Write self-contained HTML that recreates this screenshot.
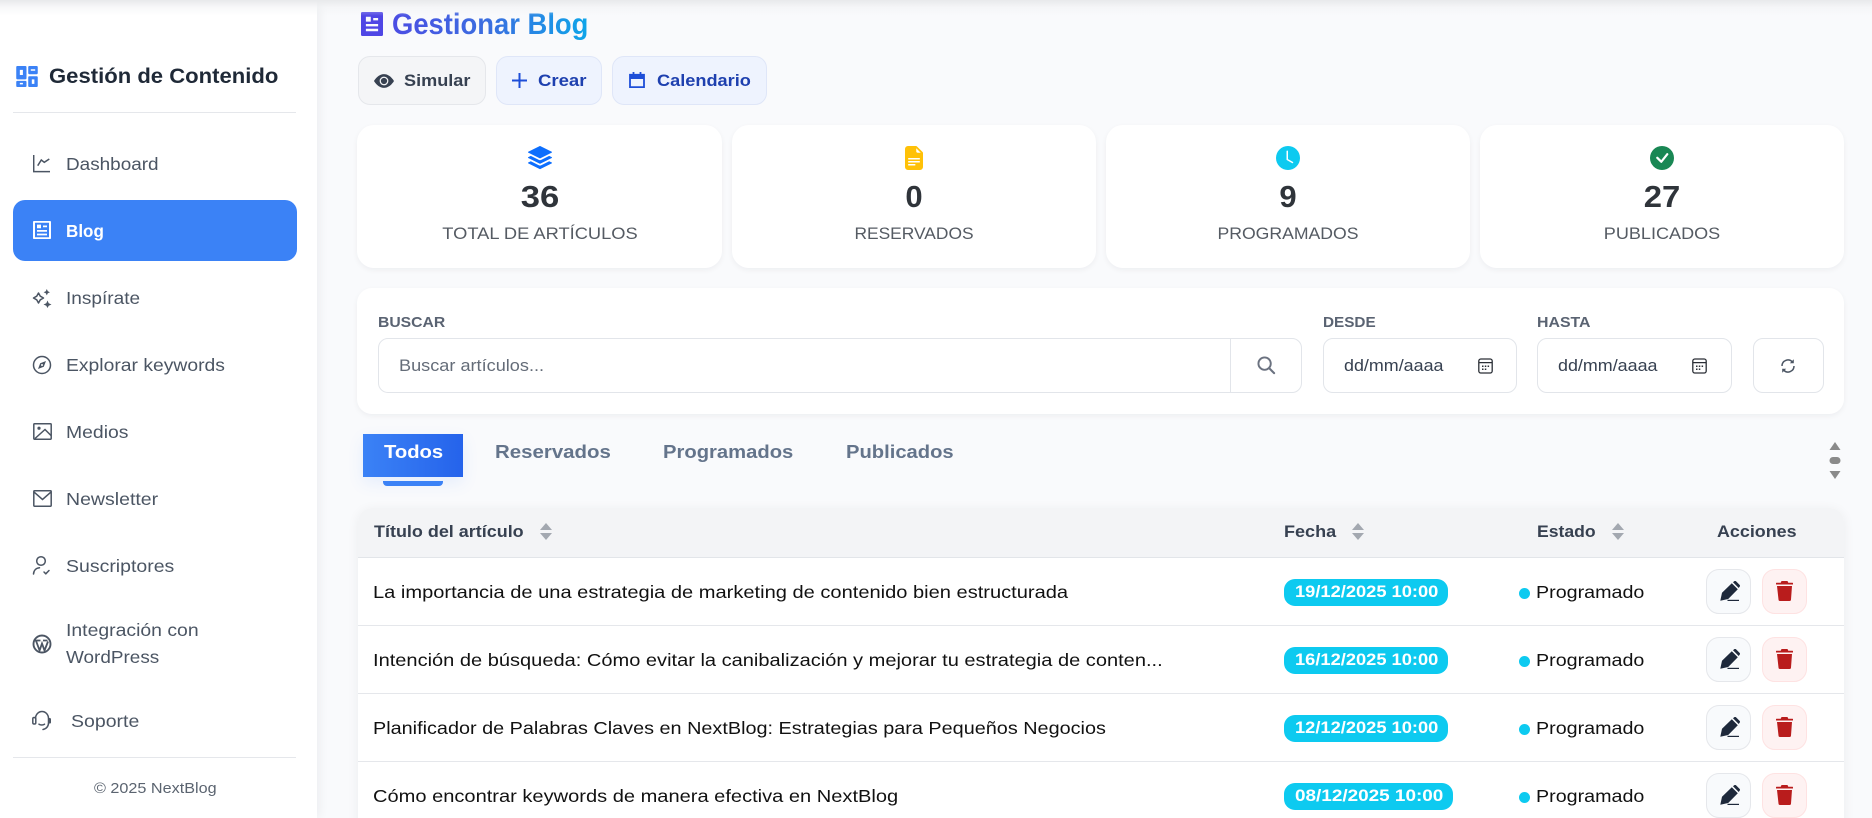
<!DOCTYPE html>
<html lang="es"><head><meta charset="utf-8"><title>Gestionar Blog</title>
<style>
*{box-sizing:border-box}
html,body{margin:0;padding:0;width:1872px;height:818px;overflow:hidden}
body{position:relative;background:#f9fafc;font-family:"Liberation Sans",Arial,sans-serif;color:#111}
.t{position:absolute;white-space:nowrap;line-height:24px;height:24px;transform-origin:left center}
.c{transform:translateX(-50%);transform-origin:center center}
.abs,svg{position:absolute}
#side{position:absolute;left:0;top:0;width:317px;height:818px;background:#fff;box-shadow:2px 0 10px rgba(15,23,42,.06)}
#topsh{position:absolute;left:0;top:0;width:1872px;height:16px;background:linear-gradient(#e8e9eb,rgba(240,241,243,.5) 45%,rgba(249,250,252,0));z-index:5}
.nav{font-size:17.5px;color:#4b5563}
.ic{fill:none;stroke:#4b5563;stroke-width:1.5}
.btn{position:absolute;top:56px;height:49px;border-radius:12px;border:1px solid #e5e7eb;background:#f4f5f7}
.blue{background:#eef3fe;border-color:#dfe6f8}
.bt{font-size:17px;font-weight:700;top:69px}
.card{position:absolute;top:125px;height:143px;width:365px;background:#fff;border-radius:17px;box-shadow:0 2px 6px rgba(15,23,42,.05)}
.num{font-size:31px;font-weight:700;color:#2f343a;top:185px}
.lab{font-size:16.5px;color:#555b63;top:222px}
.fl{font-size:15px;font-weight:700;color:#5a6372;top:311px}
.inp{position:absolute;top:338px;height:55px;background:#fff;border:1px solid #e2e5ea;border-radius:10px}
.tab{font-size:18.5px;font-weight:700;color:#64748b;top:440px}
.th{font-size:17px;font-weight:700;color:#374151;top:520px}
.row{position:absolute;left:358px;width:1486px;height:68px;background:#fff;border-bottom:1px solid #e5e7eb}
.rt{font-size:17.5px;color:#111}
.badge{position:absolute;left:1284px;height:27px;background:#0dcaf0;border-radius:11px}
.bd{font-size:17px;font-weight:700;color:#fff}
.dot{position:absolute;left:1519px;width:11px;height:11px;border-radius:50%;background:#0dcaf0}
.ab{position:absolute;width:45px;height:45px;border-radius:13px}
.ed{left:1706px;background:#f8fafc;border:1px solid #e5e7eb}
.de{left:1762px;background:#fef2f2;border:1px solid #fee2e2}
</style></head><body>

<svg width="0" height="0" style="left:0;top:0">
<symbol id="pen" viewBox="0 0 20 20"><path fill="#1e293b" d="M.3 19.700 2 11.800 11.800 2.200 17.800 8.200 8.200 18zM13 1.200 14.200.3a1.300 1.300 0 0 1 1.800 0l3.600 3.600a1.300 1.300 0 0 1 0 1.800L18.700 7z"/><path stroke="#1e293b" stroke-width="1.200" d="M7.500 19.400H19"/></symbol>
<symbol id="bin" viewBox="0 0 17 20"><path fill="#b91c1c" d="M5.500 0h6l.8 1.700h4.200a.5.5 0 0 1 .5.500V3.500H0V2.200a.5.5 0 0 1 .5-.5h4.200zM1 5h15l-1 13.500a1.500 1.500 0 0 1-1.500 1.500h-9.500A1.500 1.500 0 0 1 2.500 18.500z"/></symbol>
<symbol id="sort" viewBox="0 0 12 17"><path fill="#a3a8b0" d="M6 0l6 7H0zM6 17 0 10h12z"/></symbol>
<symbol id="cal" viewBox="0 0 15 16"><rect x=".8" y="1" width="13.400" height="14" rx="2" fill="none" stroke="#2b2f36" stroke-width="1.300"/><path fill="#2b2f36" d="M1 4h13v1.200H1zM4 7.500h1.500V9H4zM6.800 7.500h1.500V9H6.800zM9.600 7.500h1.500V9H9.600zM4 10.500h1.500V12H4zM6.800 10.500h1.500V12H6.800z"/></symbol>
</svg>

<div id="side"></div>

<!-- Logo -->
<svg style="left:15.500px;top:65.500px" width="22" height="21" viewBox="0 0 21 20.500"><path fill="#3b82f6" fill-rule="evenodd" d="M1 0h8a1 1 0 0 1 1 1v11a1 1 0 0 1-1 1H1a1 1 0 0 1-1-1V1a1 1 0 0 1 1-1zm2.500 3.800v5h3v-5zM12.700 0H20a1 1 0 0 1 1 1v6a1 1 0 0 1-1 1h-7.300a1 1 0 0 1-1-1V1a1 1 0 0 1 1-1zm1.500 3.200v1.400h4.300V3.200zM1 14.500h8a1 1 0 0 1 1 1v4a1 1 0 0 1-1 1H1a1 1 0 0 1-1-1v-4a1 1 0 0 1 1-1zm2.500 2v1.400h3v-1.400zM12.700 10H20a1 1 0 0 1 1 1v8.500a1 1 0 0 1-1 1h-7.300a1 1 0 0 1-1-1V11a1 1 0 0 1 1-1zm2.500 3v4.500h2.500V13z"/></svg>
<span class="t" style="left:49px;top:64px;font-size:21.500px;font-weight:700;color:#1f2937;--w:229">Gestión de Contenido</span>
<div class="abs" style="left:13px;top:112px;width:283px;height:1px;background:#e5e7eb"></div>

<!-- Nav -->
<svg style="left:33px;top:155px" width="18" height="18" viewBox="0 0 18 18"><path class="ic" stroke-width="1.300" d="M.7 0V16.600H17"/><path class="ic" stroke-width="1.300" d="M4.700 10.700 8.300 5 11.300 7.300 16.300 4"/></svg>
<span class="t nav" style="left:66px;top:152px;--w:93">Dashboard</span>

<div class="abs" style="left:13px;top:200px;width:284px;height:61px;background:#3b82f6;border-radius:12px"></div>
<svg style="left:33px;top:221px" width="18" height="18" viewBox="3 2 18 20" preserveAspectRatio="none"><path fill="#fff" d="M20 22H4C3.448 22 3 21.552 3 21V3C3 2.448 3.448 2 4 2H20C20.552 2 21 2.448 21 3V21C21 21.552 20.552 22 20 22ZM19 20V4H5V20H19ZM7 6H11V10H7V6ZM7 12H17V14H7V12ZM7 16H17V18H7V16ZM13 7H17V9H13V7Z"/></svg>
<span class="t" style="left:66px;top:219px;font-size:17.500px;font-weight:700;color:#fff;--w:38">Blog</span>

<svg style="left:32px;top:288px" width="20" height="20" viewBox="0 0 20 20"><path class="ic" stroke-linejoin="round" d="M7.500 5.500 9.300 8.700 12.500 10.500 9.300 12.300 7.500 15.500 5.700 12.300 2.500 10.500 5.700 8.700z" transform="translate(-1 -.5)"/><path fill="#4b5563" d="M14.800 1l1 2.200 2.200 1-2.200 1-1 2.200-1-2.200-2.200-1 2.200-1zM15.500 12.500l1.200 2.800 2.800 1.200-2.800 1.200-1.200 2.300-1.200-2.300-2.800-1.200 2.800-1.200z"/></svg>
<span class="t nav" style="left:66px;top:286px;--w:74">Inspírate</span>

<svg style="left:32px;top:355px" width="20" height="20" viewBox="0 0 20 20"><circle cx="10" cy="10" r="8.500" class="ic"/><path fill="#4b5563" fill-rule="evenodd" d="M14 6 11.800 11.800 6 14 8.200 8.200zM10 9a1 1 0 1 0 0 2 1 1 0 0 0 0-2z"/></svg>
<span class="t nav" style="left:66px;top:353px;--w:159">Explorar keywords</span>

<svg style="left:32.500px;top:423px" width="19" height="17" viewBox="0 0 19 17"><rect x=".8" y=".8" width="17.400" height="15.400" rx=".8" class="ic"/><path class="ic" d="M2 15.500 12 6.500 18 12.500"/><circle cx="6" cy="5.200" r="1.600" fill="#4b5563"/></svg>
<span class="t nav" style="left:66px;top:420px;--w:62">Medios</span>

<svg style="left:32.500px;top:490px" width="19" height="17" viewBox="0 0 19 17"><rect x=".8" y=".8" width="17.400" height="15.400" rx=".8" class="ic"/><path class="ic" d="M1.200 2.200 9.500 9.500 17.800 2.200"/></svg>
<span class="t nav" style="left:66px;top:487px;--w:92.500">Newsletter</span>

<svg style="left:32px;top:555px" width="20" height="21" viewBox="0 0 20 21"><circle cx="9" cy="6" r="4.300" class="ic"/><path class="ic" stroke-linecap="round" d="M1.500 19C1.800 15.500 4 13 7.500 12.800"/><path class="ic" stroke-linecap="round" stroke-linejoin="round" d="M12 17l1.800 1.800 3.200-3.300"/></svg>
<span class="t nav" style="left:66px;top:554px;--w:108">Suscriptores</span>

<svg style="left:32px;top:634px" width="20" height="20" viewBox="0 0 20 20"><circle cx="10" cy="10" r="8.500" fill="none" stroke="#4b5563" stroke-width="1.900"/><path fill="none" stroke="#4b5563" stroke-width="1.800" d="M3.800 6.200 7.600 16.500 10 9.500 12.500 16.500 16 7.500M2.800 6.500H8.500M11 6.500H15.500"/></svg>
<span class="t nav" style="left:66px;top:618px;--w:133">Integración con</span>
<span class="t nav" style="left:66px;top:645px;--w:93">WordPress</span>

<svg style="left:32px;top:710px" width="20" height="21" viewBox="0 0 20 21"><path class="ic" stroke-linecap="round" d="M3.500 8.500C3.500 4.500 6.500 1.500 10 1.500S16.500 4.500 16.500 8.500V13C16.500 16.500 14 19 11 19.500M7 14.200C8.500 15.200 11 15.200 12.500 14.200"/><rect x=".8" y="7.500" width="3" height="6.500" rx="1.300" class="ic"/><rect x="16" y="8" width="3" height="5.500" rx="1.300" fill="#4b5563"/></svg>
<span class="t nav" style="left:71px;top:709px;--w:68">Soporte</span>

<div class="abs" style="left:13px;top:757px;width:283px;height:1px;background:#e5e7eb"></div>
<span class="t" style="left:94px;top:777px;font-size:15px;color:#5b6470;--w:123">© 2025 NextBlog</span>

<!-- Title -->
<svg style="left:361px;top:12px" width="22" height="24" viewBox="3 2 18 20" preserveAspectRatio="none"><path fill="#4f46e5" fill-rule="evenodd" d="M20 22H4C3.448 22 3 21.552 3 21V3C3 2.448 3.448 2 4 2H20C20.552 2 21 2.448 21 3V21C21 21.552 20.552 22 20 22ZM7 6V10H11V6H7ZM7 12V14H17V12H7ZM7 16V18H17V16H7ZM13 7V9H17V7H13Z"/></svg>
<span class="t" style="left:392px;top:6px;height:38px;line-height:38px;font-size:29.500px;font-weight:700;color:transparent;background:linear-gradient(90deg,#4b4de3,#3a6fe0 50%,#0ea5e9);-webkit-background-clip:text;background-clip:text;--w:196">Gestionar Blog</span>

<!-- Buttons -->
<div class="btn" style="left:358px;width:128px"></div>
<svg style="left:374px;top:71px" width="20" height="20" viewBox="0 0 16 16"><path fill="#374151" d="M10.500 8a2.500 2.500 0 1 1-5 0 2.500 2.500 0 0 1 5 0z"/><path fill="#374151" d="M0 8s3-5.500 8-5.500S16 8 16 8s-3 5.500-8 5.500S0 8 0 8zm8 3.500a3.500 3.500 0 1 0 0-7 3.500 3.500 0 0 0 0 7z"/></svg>
<span class="t bt" style="left:404px;color:#374151;--w:66">Simular</span>

<div class="btn blue" style="left:496px;width:106px"></div>
<svg style="left:512px;top:73px" width="15" height="15" viewBox="0 0 15 15"><path stroke="#1d4ed8" stroke-width="2" d="M7.500 0v15M0 7.500h15"/></svg>
<span class="t bt" style="left:538px;color:#1e40af;--w:48">Crear</span>

<div class="btn blue" style="left:612px;width:155px"></div>
<svg style="left:629px;top:72px" width="16" height="16" viewBox="0 0 16 16"><path fill="none" stroke="#1d4ed8" stroke-width="1.800" d="M1 2.800h14v12.300H1zM4.500 0v3.500M11.500 0v3.500"/><path fill="#1d4ed8" d="M1 2.800h14v4.200H1z"/></svg>
<span class="t bt" style="left:657px;color:#1e40af;--w:94">Calendario</span>

<!-- Stat cards -->
<div class="card" style="left:357px"></div>
<div class="card" style="left:732px;width:364px"></div>
<div class="card" style="left:1106px;width:364px"></div>
<div class="card" style="left:1480px;width:364px"></div>

<svg style="left:528px;top:146px" width="24" height="24" viewBox="0 0 16 16"><path fill="#0d6efd" d="M14.120 10.163l1.715.858c.22.11.22.424 0 .534L8.267 15.340a.598.598 0 0 1-.534 0L.165 11.555a.299.299 0 0 1 0-.534l1.716-.858 5.317 2.659c.505.252 1.100.252 1.604 0l5.317-2.660z"/><path fill="#0d6efd" d="M14.120 6.576l1.715.858c.22.11.22.424 0 .534l-7.568 3.784a.598.598 0 0 1-.534 0L.165 7.968a.299.299 0 0 1 0-.534l1.716-.858 5.317 2.659c.505.252 1.100.252 1.604 0l5.317-2.659z"/><path fill="#0d6efd" d="M7.733.063a.598.598 0 0 1 .534 0l7.568 3.784a.3.3 0 0 1 0 .535L8.267 8.165a.598.598 0 0 1-.534 0L.165 4.382a.299.299 0 0 1 0-.535L7.733.063z"/></svg>
<svg style="left:902px;top:146px" width="24" height="24" viewBox="0 0 16 16"><path fill="#ffc107" d="M9.293 0H4a2 2 0 0 0-2 2v12a2 2 0 0 0 2 2h8a2 2 0 0 0 2-2V4.707A1 1 0 0 0 13.707 4L10 .293A1 1 0 0 0 9.293 0zM9.500 3.500v-2l3 3h-2a1 1 0 0 1-1-1zM4.500 9a.5.5 0 0 1 0-1h7a.5.5 0 0 1 0 1h-7zM4 10.500a.5.5 0 0 1 .5-.5h7a.5.5 0 0 1 0 1h-7a.5.5 0 0 1-.5-.5zm.5 2.500a.5.5 0 0 1 0-1h4a.5.5 0 0 1 0 1h-4z"/></svg>
<svg style="left:1276px;top:146px" width="24" height="24" viewBox="0 0 16 16"><path fill="#0dcaf0" d="M16 8A8 8 0 1 1 0 8a8 8 0 0 1 16 0zM8 3.500a.5.5 0 0 0-1 0V9a.5.5 0 0 0 .252.434l3.500 2a.5.5 0 0 0 .496-.868L8 8.710V3.500z"/></svg>
<svg style="left:1650px;top:146px" width="24" height="24" viewBox="0 0 16 16"><path fill="#198754" d="M16 8A8 8 0 1 1 0 8a8 8 0 0 1 16 0zm-3.970-3.030a.75.75 0 0 0-1.080.022L7.477 9.417 5.384 7.323a.75.75 0 0 0-1.060 1.060L6.970 11.030a.75.75 0 0 0 1.079-.020l3.992-4.990a.75.75 0 0 0-.01-1.050z"/></svg>

<span class="t num c" style="left:540px;--w:38">36</span>
<span class="t num c" style="left:914px">0</span>
<span class="t num c" style="left:1288px">9</span>
<span class="t num c" style="left:1662px;--w:36">27</span>
<span class="t lab c" style="left:540px;--w:195">TOTAL DE ARTÍCULOS</span>
<span class="t lab c" style="left:914px;--w:119">RESERVADOS</span>
<span class="t lab c" style="left:1288px;--w:141">PROGRAMADOS</span>
<span class="t lab c" style="left:1662px;--w:116">PUBLICADOS</span>

<!-- Filters -->
<div class="abs" style="left:357px;top:288px;width:1487px;height:126px;background:#fff;border-radius:15px;box-shadow:0 2px 6px rgba(15,23,42,.05)"></div>
<span class="t fl" style="left:378px;--w:67">BUSCAR</span>
<span class="t fl" style="left:1323px;--w:53">DESDE</span>
<span class="t fl" style="left:1537px;--w:54">HASTA</span>
<div class="inp" style="left:378px;width:924px"></div>
<div class="abs" style="left:1230px;top:338px;width:1px;height:55px;background:#e2e5ea"></div>
<span class="t" style="left:399px;top:354px;font-size:17px;color:#646c78;--w:145">Buscar artículos...</span>
<svg style="left:1257px;top:356px" width="19" height="19" viewBox="0 0 20 20"><circle cx="8" cy="8" r="6.500" fill="none" stroke="#6b7280" stroke-width="2"/><path stroke="#6b7280" stroke-width="2.200" stroke-linecap="round" d="M12.800 12.800 18 18"/></svg>
<div class="inp" style="left:1323px;width:194px"></div>
<div class="inp" style="left:1537px;width:195px"></div>
<span class="t" style="left:1344px;top:354px;font-size:17px;color:#374151;--w:100">dd/mm/aaaa</span>
<span class="t" style="left:1558px;top:354px;font-size:17px;color:#374151;--w:100">dd/mm/aaaa</span>
<svg style="left:1478px;top:358px" width="15" height="16"><use href="#cal"/></svg>
<svg style="left:1692px;top:358px" width="15" height="16"><use href="#cal"/></svg>
<div class="inp" style="left:1753px;width:71px"></div>
<svg style="left:1780px;top:358px" width="16" height="16" viewBox="0 0 16 16"><path fill="none" stroke="#4b5563" stroke-width="1.500" d="M2 8a6 6 0 0 1 10.300-4.200M14 8a6 6 0 0 1-10.300 4.200"/><path fill="#4b5563" d="M13.800 1.200v4h-4zM2.200 14.800v-4h4z"/></svg>

<!-- Tabs -->
<div class="abs" style="left:363px;top:434px;width:100px;height:43px;background:linear-gradient(90deg,#3b82f6,#2563eb);box-shadow:0 6px 16px rgba(59,130,246,.1)"></div>
<div class="abs" style="left:383px;top:481px;width:60px;height:5px;background:#3b82f6;border-radius:0 0 4px 4px"></div>
<span class="t tab" style="left:384px;color:#fff;--w:59">Todos</span>
<span class="t tab" style="left:495px;--w:116">Reservados</span>
<span class="t tab" style="left:663px;--w:130">Programados</span>
<span class="t tab" style="left:846px;--w:108">Publicados</span>

<svg style="left:1829px;top:441px" width="12" height="39" viewBox="0 0 12 39"><path fill="#8a8a8a" d="M6 1l5.500 8H.5zM6 38l-5.500-8h11z"/><rect x=".5" y="16" width="11" height="7" rx="3.500" fill="#8a8a8a"/></svg>

<!-- Table -->
<div class="abs" style="left:358px;top:508px;width:1486px;height:320px;border-radius:14px 14px 0 0;box-shadow:0 2px 12px rgba(15,23,42,.06);background:#fff"></div>
<div class="abs" style="left:358px;top:508px;width:1486px;height:50px;background:#f3f4f6;border-radius:14px 14px 0 0;border-bottom:1px solid #e2e5e9"></div>
<span class="t th" style="left:374px;--w:150">Título del artículo</span>
<span class="t th" style="left:1284px;--w:52">Fecha</span>
<span class="t th" style="left:1537px;--w:59">Estado</span>
<span class="t th" style="left:1717px;--w:80">Acciones</span>
<svg style="left:540px;top:523px" width="12" height="17"><use href="#sort"/></svg>
<svg style="left:1352px;top:523px" width="12" height="17"><use href="#sort"/></svg>
<svg style="left:1612px;top:523px" width="12" height="17"><use href="#sort"/></svg>

<!-- Row 1 -->
<div class="row" style="top:558px"></div>
<span class="t rt" style="left:373px;top:580px;--w:695">La importancia de una estrategia de marketing de contenido bien estructurada</span>
<div class="badge" style="top:579px;width:164px"></div>
<span class="t bd" style="left:1295px;top:580px;--w:143">19/12/2025 10:00</span>
<div class="dot" style="top:588px"></div>
<span class="t rt" style="left:1536px;top:580px;--w:108">Programado</span>
<div class="ab ed" style="top:569px"></div><div class="ab de" style="top:569px"></div>
<svg style="left:1720px;top:581px" width="20" height="20"><use href="#pen"/></svg>
<svg style="left:1776px;top:581px" width="17" height="20"><use href="#bin"/></svg>

<!-- Row 2 -->
<div class="row" style="top:626px"></div>
<span class="t rt" style="left:373px;top:648px;--w:790">Intención de búsqueda: Cómo evitar la canibalización y mejorar tu estrategia de conten...</span>
<div class="badge" style="top:647px;width:164px"></div>
<span class="t bd" style="left:1295px;top:648px;--w:143">16/12/2025 10:00</span>
<div class="dot" style="top:656px"></div>
<span class="t rt" style="left:1536px;top:648px;--w:108">Programado</span>
<div class="ab ed" style="top:637px"></div><div class="ab de" style="top:637px"></div>
<svg style="left:1720px;top:649px" width="20" height="20"><use href="#pen"/></svg>
<svg style="left:1776px;top:649px" width="17" height="20"><use href="#bin"/></svg>

<!-- Row 3 -->
<div class="row" style="top:694px"></div>
<span class="t rt" style="left:373px;top:716px;--w:733">Planificador de Palabras Claves en NextBlog: Estrategias para Pequeños Negocios</span>
<div class="badge" style="top:715px;width:164px"></div>
<span class="t bd" style="left:1295px;top:716px;--w:143">12/12/2025 10:00</span>
<div class="dot" style="top:724px"></div>
<span class="t rt" style="left:1536px;top:716px;--w:108">Programado</span>
<div class="ab ed" style="top:705px"></div><div class="ab de" style="top:705px"></div>
<svg style="left:1720px;top:717px" width="20" height="20"><use href="#pen"/></svg>
<svg style="left:1776px;top:717px" width="17" height="20"><use href="#bin"/></svg>

<!-- Row 4 -->
<div class="row" style="top:762px;height:56px;border-bottom:0"></div>
<span class="t rt" style="left:373px;top:784px;--w:525">Cómo encontrar keywords de manera efectiva en NextBlog</span>
<div class="badge" style="top:783px;width:169px"></div>
<span class="t bd" style="left:1295px;top:784px;--w:148">08/12/2025 10:00</span>
<div class="dot" style="top:792px"></div>
<span class="t rt" style="left:1536px;top:784px;--w:108">Programado</span>
<div class="ab ed" style="top:773px"></div><div class="ab de" style="top:773px"></div>
<svg style="left:1720px;top:785px" width="20" height="20"><use href="#pen"/></svg>
<svg style="left:1776px;top:785px" width="17" height="20"><use href="#bin"/></svg>

<div id="topsh"></div>
<script>
document.querySelectorAll('.t').forEach(function(e){
  var w=parseFloat(e.style.getPropertyValue('--w'));
  if(!w)return;
  var a=e.offsetWidth;
  var r=w/a;
  e.style.transform=(e.classList.contains('c')?'translateX(-50%) ':'')+'scaleX('+r+')';
});
</script>
</body></html>
